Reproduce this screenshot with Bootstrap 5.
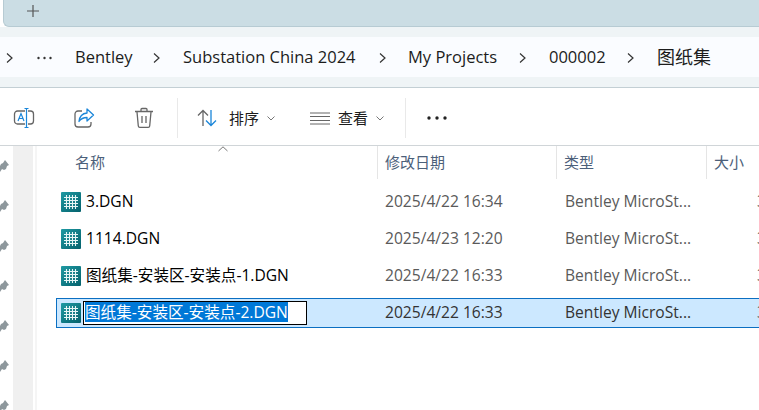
<!DOCTYPE html>
<html lang="zh-CN">
<head>
    <meta charset="utf-8">
    <title>图纸集</title>
    <link href="https://cdn.jsdelivr.net/npm/bootstrap@5.3.3/dist/css/bootstrap.min.css" rel="stylesheet">
    <style>
        html, body {
            height: 410px;
            overflow: hidden;
        }
        body {
            font-family: "Open Sans", "Noto Sans CJK SC", sans-serif;
            background-color: #fff;
            color: #1c1c1c;
            font-size: 15px;
        }
        .tab-strip {
            height: 27px;
            margin-left: 3px;
            padding-left: 22px;
            background-color: #cbdde4;
            border-bottom: 1px solid #b7cbd3;
            border-left: 1px solid #b7cbd3;
            border-bottom-left-radius: 6px;
        }
        .address-wrap {
            height: 61px;
            padding: 10px 0;
            background-color: #eff4f6;
            border-bottom: 1px solid #c3cfd4;
        }
        .address-bar {
            height: 40px;
            background-color: #fafcff;
            font-size: 16.5px;
            white-space: nowrap;
        }
        .crumb-sep {
            flex-shrink: 0;
        }
        .crumb-first { width: 37px; padding-left: 6px; }
        .crumb-more { width: 38px; }
        .crumb-bentley { width: 57px; }
        .crumb-sub { width: 173px; }
        .crumb-proj { width: 90px; }
        .crumb-num { width: 57px; }
        .crumb-last { font-size: 18px; }
        .sep-a { width: 51px; padding-left: 21px; }
        .sep-b { width: 52px; padding-left: 23px; }
        .tool-bar {
            height: 58px;
            padding-top: 10px;
            padding-bottom: 7px;
            border-bottom: 1px solid #d0d5d8;
        }
        .tool-a { width: 48px; }
        .tool-b { width: 72px; }
        .tool-c { width: 48px; margin-right: 9px; }
        .tool-divider {
            width: 1px;
            background-color: #e9e9e9;
        }
        .sort-btn { width: 132px; padding-left: 19px; }
        .view-btn { width: 95px; }
        .more-btn { padding-left: 21px; }
        .main-area {
            height: 265px;
            overflow: hidden;
        }
        .pin-col {
            width: 13px;
            padding-top: 14px;
            gap: 28px;
            flex-shrink: 0;
        }
        .scroll-col {
            width: 20px;
            background-color: #f0f0f0;
            border-right: 2px solid #fff;
            box-sizing: content-box;
            flex-shrink: 0;
        }
        .list-edge {
            width: 2px;
            background-color: #f5f5f5;
            flex-shrink: 0;
        }
        .file-list {
            flex: 1 1 auto;
            min-width: 0;
            position: relative;
            overflow: hidden;
        }
        .head-row {
            height: 33px;
            color: #4c607a;
            display: grid;
            grid-template-columns: 340px 179px 150px 60px;
        }
        .head-cell {
            padding-left: 7px;
            padding-top: 5px;
            border-left: 1px solid #e5e5e5;
            white-space: nowrap;
        }
        .head-name {
            padding-left: 38px;
            border-left: 0;
        }
        .sort-caret {
            position: absolute;
            left: 181px;
            top: 0;
        }
        .file-row {
            height: 30px;
            margin: 0 -2px 7px 19px;
            padding-left: 4px;
            display: grid;
            grid-template-columns: 24px 300px 180px 192px 60px;
            align-items: center;
            border: 1px solid transparent;
            font-size: 15.6px;
            white-space: nowrap;
        }
        .file-row.is-first { margin-top: 8px; }
        .file-row.is-selected {
            background-color: #cce8ff;
            border-color: #0b6fc2;
        }
        .file-name { padding-left: 1px; color: #000; }
        .file-date, .file-kind { color: #5a5a5a; }
        .is-selected .file-date, .is-selected .file-kind { color: #333; }
        .file-size { color: #5a5a5a; }
        .rename-box {
            display: block;
            width: 224px;
            height: 24px;
            margin-left: -3px;
            padding: 0 1px;
            background-color: #fff;
            border: 1px solid #000;
            line-height: 20px;
        }
        .rename-box span {
            display: inline-block;
            background-color: #0078d7;
            color: #fff;
        }
    </style>
</head>
<body>

<div class="tab-strip d-flex align-items-start pt-1">
    <svg width="14" height="14" viewBox="0 0 14 14"><path d="M7 1v12M1 7h12" stroke="#555" stroke-width="1.2" fill="none"/></svg>
</div>

<div class="address-wrap">
    <div class="address-bar d-flex align-items-center">
        <div class="crumb-first"><svg width="8" height="10" viewBox="0 0 8 10"><use href="#chev"/></svg></div>
        <div class="crumb-more"><svg width="15" height="4" viewBox="0 0 15 4"><circle cx="1.500" cy="2" r="1.200" fill="#333"/><circle cx="7.500" cy="2" r="1.200" fill="#333"/><circle cx="13.500" cy="2" r="1.200" fill="#333"/></svg></div>
        <div class="crumb-bentley">Bentley</div>
        <div class="crumb-sep sep-a" style="width:51px;padding-left:21px"><svg width="8" height="10" viewBox="0 0 8 10"><use href="#chev"/></svg></div>
        <div class="crumb-sub">Substation China 2024</div>
        <div class="crumb-sep sep-b"><svg width="8" height="10" viewBox="0 0 8 10"><use href="#chev"/></svg></div>
        <div class="crumb-proj">My Projects</div>
        <div class="crumb-sep sep-a"><svg width="8" height="10" viewBox="0 0 8 10"><use href="#chev"/></svg></div>
        <div class="crumb-num">000002</div>
        <div class="crumb-sep sep-a"><svg width="8" height="10" viewBox="0 0 8 10"><use href="#chev"/></svg></div>
        <div class="crumb-last">图纸集</div>
    </div>
</div>

<div class="tool-bar d-flex align-items-stretch">
    <div class="tool-a d-flex align-items-center justify-content-center">
        <svg width="22" height="22" viewBox="0 0 22 22"><rect x="1.500" y="4" width="19" height="13" rx="3" fill="none" stroke="#666" stroke-width="1.300"/><rect x="12" y="2" width="3" height="18" fill="#fff"/><path d="M13.500 1.500v19M11.500 1.500h4M11.500 20.500h4" stroke="#1a86d9" stroke-width="1.200" fill="none"/><path d="M5 14 8 6.500 11 14M6 11.500h4" stroke="#1a86d9" stroke-width="1.200" fill="none"/></svg>
    </div>
    <div class="tool-b d-flex align-items-center justify-content-center">
        <svg width="22" height="22" viewBox="0 0 22 22"><path d="M9 4H5a3 3 0 0 0-3 3v10a3 3 0 0 0 3 3h10a3 3 0 0 0 3-3v-2" fill="none" stroke="#666" stroke-width="1.300"/><path d="M14 2l6.500 6-6.500 6v-3.500c-4 0-6 1-8 4 .5-5 3-8 8-8.500z" fill="none" stroke="#1a86d9" stroke-width="1.300" stroke-linejoin="round"/></svg>
    </div>
    <div class="tool-c d-flex align-items-center justify-content-center">
        <svg width="20" height="22" viewBox="0 0 20 22"><path d="M1 4.500h18M7 4V2.500A1 1 0 0 1 8 1.500h4a1 1 0 0 1 1 1V4M3 5l1.300 14a1.500 1.500 0 0 0 1.500 1.300h8.400a1.500 1.500 0 0 0 1.500-1.300L17 5M8 9v7M12 9v7" fill="none" stroke="#666" stroke-width="1.300"/></svg>
    </div>
    <div class="tool-divider"></div>
    <div class="sort-btn d-flex align-items-center gap-2">
        <svg width="20" height="18" viewBox="0 0 20 18"><path d="M6 17V1.500M1 6.500l5-5 5 5" fill="none" stroke="#666" stroke-width="1.300"/><path d="M14 1v15.500M9 11.500l5 5 5-5" fill="none" stroke="#1a86d9" stroke-width="1.300"/></svg>
        <span class="ms-1">排序</span>
        <svg width="8" height="5" viewBox="0 0 8 5"><use href="#caret"/></svg>
    </div>
    <div class="view-btn d-flex align-items-center gap-2">
        <svg width="20" height="13" viewBox="0 0 20 13"><path d="M0 1h20M0 4.500h20M0 8.500h20M0 12h20" fill="none" stroke="#666" stroke-width="1"/></svg>
        <span>查看</span>
        <svg width="8" height="5" viewBox="0 0 8 5"><use href="#caret"/></svg>
    </div>
    <div class="tool-divider"></div>
    <div class="more-btn d-flex align-items-center">
        <svg width="20" height="4" viewBox="0 0 20 4"><circle cx="2" cy="2" r="1.700" fill="#222"/><circle cx="10" cy="2" r="1.700" fill="#222"/><circle cx="18" cy="2" r="1.700" fill="#222"/></svg>
    </div>
</div>

<div class="main-area d-flex">
    <div class="pin-col d-flex flex-column">
        <svg class="flex-shrink-0" width="9" height="12" viewBox="0 0 9 12"><use href="#pin"/></svg>
        <svg class="flex-shrink-0" width="9" height="12" viewBox="0 0 9 12"><use href="#pin"/></svg>
        <svg class="flex-shrink-0" width="9" height="12" viewBox="0 0 9 12"><use href="#pin"/></svg>
        <svg class="flex-shrink-0" width="9" height="12" viewBox="0 0 9 12"><use href="#pin"/></svg>
        <svg class="flex-shrink-0" width="9" height="12" viewBox="0 0 9 12"><use href="#pin"/></svg>
        <svg class="flex-shrink-0" width="9" height="12" viewBox="0 0 9 12"><use href="#pin"/></svg>
        <svg class="flex-shrink-0" width="9" height="12" viewBox="0 0 9 12"><use href="#pin"/></svg>
    </div>
    <div class="scroll-col"></div>
    <div class="list-edge"></div>
    <div class="file-list">
        <svg class="sort-caret" width="10" height="6" viewBox="0 0 10 6"><path d="M.5 5 5 .8 9.500 5" fill="none" stroke="#777"/></svg>
        <div class="head-row">
            <div class="head-cell head-name">名称</div>
            <div class="head-cell">修改日期</div>
            <div class="head-cell">类型</div>
            <div class="head-cell">大小</div>
        </div>
        <div class="file-row is-first">
            <svg width="20" height="20" viewBox="0 0 20 20"><use href="#dgn"/></svg>
            <div class="file-name">3.DGN</div>
            <div class="file-date">2025/4/22 16:34</div>
            <div class="file-kind">Bentley MicroSt...</div>
            <div class="file-size">3 KB</div>
        </div>
        <div class="file-row">
            <svg width="20" height="20" viewBox="0 0 20 20"><use href="#dgn"/></svg>
            <div class="file-name">1114.DGN</div>
            <div class="file-date">2025/4/23 12:20</div>
            <div class="file-kind">Bentley MicroSt...</div>
            <div class="file-size">3 KB</div>
        </div>
        <div class="file-row">
            <svg width="20" height="20" viewBox="0 0 20 20"><use href="#dgn"/></svg>
            <div class="file-name">图纸集-安装区-安装点-1.DGN</div>
            <div class="file-date">2025/4/22 16:33</div>
            <div class="file-kind">Bentley MicroSt...</div>
            <div class="file-size">3 KB</div>
        </div>
        <div class="file-row is-selected">
            <svg width="20" height="20" viewBox="0 0 20 20"><use href="#dgn"/></svg>
            <div class="file-name"><div class="rename-box"><span>图纸集-安装区-安装点-2.DGN</span></div></div>
            <div class="file-date">2025/4/22 16:33</div>
            <div class="file-kind">Bentley MicroSt...</div>
            <div class="file-size">3 KB</div>
        </div>
    </div>
</div>

<svg width="0" height="0" class="position-absolute">
    <defs>
        <path id="chev" d="M1 .5 6 5 1 9.500" stroke="#333" stroke-width="1.200" fill="none"/>
        <path id="caret" d="M.5.5 4 4 7.500.5" fill="none" stroke="#777"/>
        <path id="pin" d="M5 0 9 5 7 6 6 9 4 10 2 9 0 12V6L1 4 3 3z" fill="#8d979c"/>
        <linearGradient id="dgn-fill" x1="0" y1="0" x2="1" y2="1">
            <stop offset="0" stop-color="#1f9aa3"/>
            <stop offset="1" stop-color="#04616c"/>
        </linearGradient>
        <g id="dgn">
            <rect width="20" height="20" rx="1" fill="url(#dgn-fill)"/>
            <path d="M3 5.500h14M3 8.500h14M3 11.500h14M3 14.500h14M5.500 3v14M8.500 3v14M11.500 3v14M14.500 3v14" stroke="#e8f6f6" stroke-width="1.100" fill="none"/>
        </g>
    </defs>
</svg>

<script src="https://cdn.jsdelivr.net/npm/bootstrap@5.3.3/dist/js/bootstrap.bundle.min.js"></script>
</body>
</html>
